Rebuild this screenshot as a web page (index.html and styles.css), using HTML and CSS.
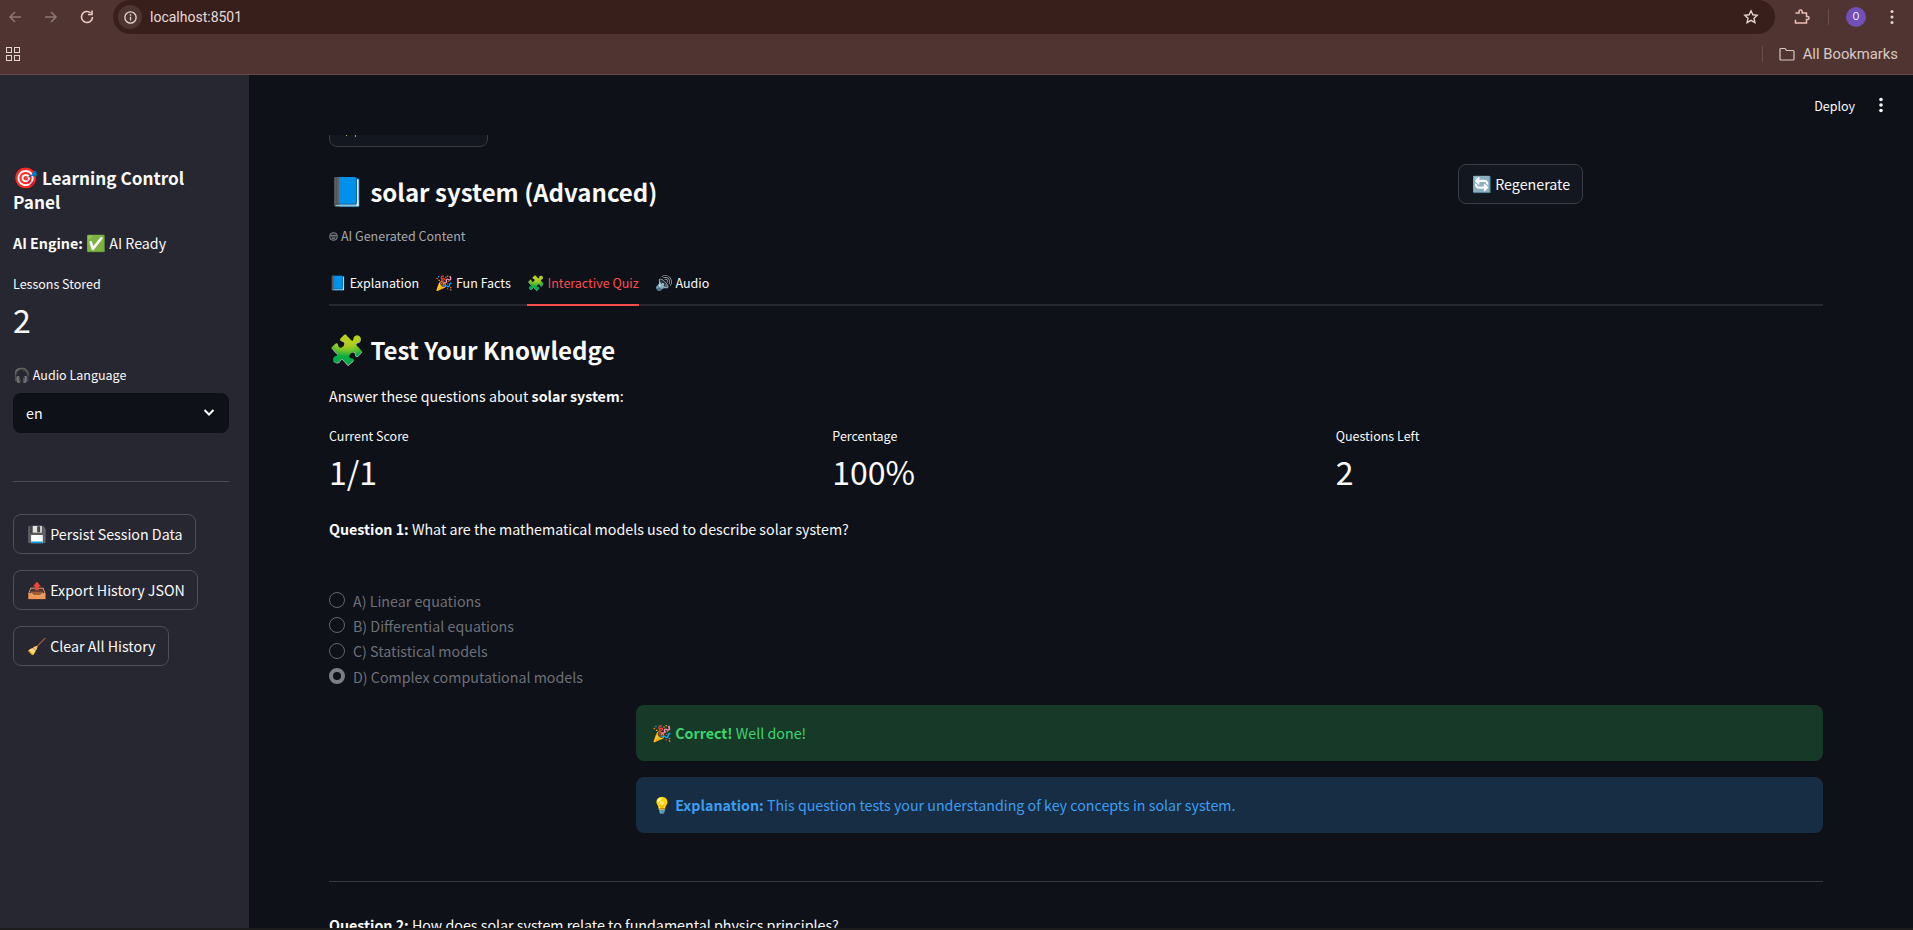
FILE: index.html
```html
<!DOCTYPE html>
<html lang="en">
<head>
<meta charset="utf-8">
<title>Streamlit</title>
<link rel="stylesheet" href="styles.css">
</head>
<body>
<div class="chrome">
  <div class="toolbar">
    <svg class="nav dim" viewBox="0 0 16 16"><path d="M14 8H3M8 3L3 8l5 5"/></svg>
    <svg class="nav dim" viewBox="0 0 16 16"><path d="M2 8h11M8 3l5 5-5 5"/></svg>
    <svg class="nav reload" viewBox="0 0 16 16"><path d="M13.500 8A5.500 5.500 0 1 1 11.600 3.800M13 1.500v4H9"/></svg>
    <div class="omnibox">
      <span class="site-chip"><svg viewBox="0 0 16 16"><circle cx="8" cy="8" r="6"/><path d="M8 7.200v4M8 4.600v1.400"/></svg></span>
      <span class="url">localhost:8501</span>
      <svg class="star" viewBox="0 0 16 16"><path d="M8 1.800l1.900 4 4.300.5-3.200 3 .9 4.300L8 11.400l-3.900 2.200.9-4.300-3.200-3 4.300-.5z"/></svg>
    </div>
    <svg class="ext" viewBox="0 0 18 18"><path d="M2.500 5h3.500V3.600a1.600 1.600 0 0 1 3.200 0V5h4.300v3.400h1a1.600 1.600 0 0 1 0 3.200h-1V15H2.500v-3.200"/></svg>
    <span class="vsep"></span>
    <span class="avatar">O</span>
    <svg class="kebab" viewBox="0 0 4 16"><circle cx="2" cy="2.500" r="1.500"/><circle cx="2" cy="8" r="1.500"/><circle cx="2" cy="13.500" r="1.500"/></svg>
  </div>
  <div class="bookmarks">
    <svg class="apps" viewBox="0 0 14 14"><rect x="0.500" y="0.500" width="5" height="5"/><rect x="8.500" y="0.500" width="5" height="5"/><rect x="0.500" y="8.500" width="5" height="5"/><rect x="8.500" y="8.500" width="5" height="5"/></svg>
    <span class="bm-sep"></span>
    <svg class="folder" viewBox="0 0 16 14"><path d="M1 2.500A1 1 0 0 1 2 1.500h4l1.500 2H14a1 1 0 0 1 1 1V12a1 1 0 0 1-1 1H2a1 1 0 0 1-1-1z"/></svg>
    <span class="bm-label">All Bookmarks</span>
  </div>
</div>
<div class="app">
  <aside class="sidebar">
    <h3 class="side-title"><span class="em">🎯</span> Learning Control Panel</h3>
    <p class="engine"><strong>AI Engine:</strong> <span class="em">✅</span> AI Ready</p>
    <div class="metric side-metric">
      <div class="metric-label">Lessons Stored</div>
      <div class="metric-value">2</div>
    </div>
    <label class="select-label"><span class="em">🎧</span> Audio Language</label>
    <div class="select"><span>en</span>
      <svg viewBox="0 0 14 14"><path d="M2.500 5L7 9.500 11.500 5"/></svg>
    </div>
    <hr class="side-rule">
    <div class="side-actions">
      <button class="btn"><span class="em">💾</span> Persist Session Data</button>
      <button class="btn"><span class="em">📤</span> Export History JSON</button>
      <button class="btn"><span class="em">🧹</span> Clear All History</button>
    </div>
  </aside>
  <main class="main">
    <header class="topbar">
      <span class="deploy">Deploy</span>
      <svg class="menu" viewBox="0 0 4 16"><circle cx="2" cy="2.500" r="1.800"/><circle cx="2" cy="8" r="1.800"/><circle cx="2" cy="13.500" r="1.800"/></svg>
    </header>
    <div class="scroll">
      <div class="content">
        <button class="btn cut-btn"><svg class="specks" viewBox="0 0 14 2"><rect x="0" y="0" width="1" height="1"/><rect x="9" y="0" width="1" height="2"/></svg></button>
        <div class="title-row">
          <div>
            <h2 class="page-title"><span class="em">📘</span> solar system (Advanced)</h2>
            <p class="caption"><svg class="bot" viewBox="0 0 9 9"><circle cx="4.500" cy="4.500" r="3.900"/><path class="bot-band" d="M1.500 3.800h6M3 6.200h3"/></svg>AI Generated Content</p>
          </div>
          <div><button class="btn regen"><span class="em">🔄</span> Regenerate</button></div>
        </div>
        <nav class="tabs">
          <span class="tab"><span class="em">📘</span> Explanation</span>
          <span class="tab"><span class="em">🎉</span> Fun Facts</span>
          <span class="tab active"><span class="em">🧩</span> Interactive Quiz</span>
          <span class="tab"><span class="em">🔊</span> Audio</span>
        </nav>
        <h3 class="section-title"><span class="em">🧩</span> Test Your Knowledge</h3>
        <p class="lead">Answer these questions about <strong>solar system</strong>:</p>
        <div class="metrics">
          <div class="metric"><div class="metric-label">Current Score</div><div class="metric-value">1/1</div></div>
          <div class="metric"><div class="metric-label">Percentage</div><div class="metric-value">100%</div></div>
          <div class="metric"><div class="metric-label">Questions Left</div><div class="metric-value">2</div></div>
        </div>
        <p class="question"><strong>Question 1:</strong> What are the mathematical models used to describe solar system?</p>
        <div class="radios">
          <div class="radio"><span class="dot"></span>A) Linear equations</div>
          <div class="radio"><span class="dot"></span>B) Differential equations</div>
          <div class="radio"><span class="dot"></span>C) Statistical models</div>
          <div class="radio"><span class="dot on"></span>D) Complex computational models</div>
        </div>
        <div class="feedback">
          <div></div>
          <div class="alerts">
            <p class="alert ok"><span class="em">🎉</span> <strong>Correct!</strong> Well done!</p>
            <p class="alert info"><span class="em">💡</span> <strong>Explanation:</strong> This question tests your understanding of key concepts in solar system.</p>
          </div>
        </div>
        <hr class="rule">
        <p class="question next"><strong>Question 2:</strong> How does solar system relate to fundamental physics principles?</p>
      </div>
    </div>
  </main>
</div>
<div class="edge"></div>
</body>
</html>
```
FILE: styles.css
```css
* { box-sizing: border-box; }
html, body { margin: 0; height: 100%; overflow: hidden; }
body {
  display: flex;
  flex-direction: column;
  background: #0e1117;
  color: #fafafa;
  font-family: "Noto Sans CJK SC", "Noto Sans", sans-serif;
  font-size: 14.250px;
}
p, h2, h3 { margin: 0; }
strong { font-weight: 600; }
.em { font-size: 1.120em; line-height: 1; }

.chrome { height: 75px; flex: none; background: #503431; border-bottom: 1px solid #6a4a44; }
.toolbar { height: 34px; display: flex; align-items: center; padding-left: 7px; }
.nav { width: 16px; height: 16px; margin-right: 20px; fill: none; stroke: #e4d6d2; stroke-width: 1.600; flex: none; }
.nav.dim { stroke: #8c7672; }
.nav.reload { stroke: #ecccc4; }
.omnibox { width: 1662px; height: 34px; flex: none; margin-left: -2px; padding: 0 16px 0 5px; background: #391f1c; border-radius: 17px; display: flex; align-items: center; }
.site-chip { width: 24px; height: 24px; border-radius: 50%; background: #4f3531; display: flex; align-items: center; justify-content: center; }
.site-chip svg { width: 15px; height: 15px; fill: none; stroke: #e6d9d5; stroke-width: 1.400; }
.url { margin-left: 8px; font: 14px "Roboto", sans-serif; color: #e8dcd9; flex: 1; }
.star { width: 16px; height: 16px; fill: none; stroke: #e4d6d2; stroke-width: 1.400; }
.ext { width: 18px; height: 18px; margin-left: 18px; fill: none; stroke: #eabfb5; stroke-width: 1.500; flex: none; }
.vsep { width: 1px; height: 16px; background: #6d4f4a; margin: 0 17px 0 17px; flex: none; }
.avatar { width: 20px; height: 20px; flex: none; border-radius: 50%; background: #7350b8; color: #f0e8fa; font: 10px/20px "Roboto", sans-serif; text-align: center; }
.kebab { width: 4px; height: 16px; margin-left: 24px; fill: #e4d6d2; flex: none; }
.bookmarks { height: 40px; display: flex; align-items: center; padding-left: 6px; padding-right: 15px; }
.apps { width: 14px; height: 14px; fill: none; stroke: #e4d6d2; stroke-width: 1; margin-right: auto; }
.bm-sep { width: 1px; height: 16px; background: #6d4f4a; margin-right: 16px; }
.folder { width: 16px; height: 14px; fill: none; stroke: #d9c9c5; stroke-width: 1.200; margin-right: 8px; }
.bm-label { font: 14.800px "Roboto", sans-serif; color: #d9c9c5; }

.app { flex: 1; min-height: 0; display: flex; }
.edge { height: 2px; flex: none; background: #1c1c1c; }
.sidebar { width: 249px; flex: none; background: #262730; padding: 91px 20px 0 13px; }
.side-title { font-size: 17.200px; font-weight: 600; line-height: 24px; }
.side-title .em { font-size: 1.180em; }
.engine { margin-top: 18px; line-height: 22px; }
.side-metric { margin-top: 20px; }
.side-metric .metric-value { margin-top: 2px; }
.select-label { display: block; margin-top: 23px; font-size: 12.500px; line-height: 20px; }
.select { height: 40px; margin-top: 8px; background: #0e1117; border-radius: 8px; padding: 0 13px 2px; display: flex; align-items: center; justify-content: space-between; }
.select svg { width: 14px; height: 14px; fill: none; stroke: #fafafa; stroke-width: 2; }
.side-rule { margin: 48px 0 32px; border: 0; border-top: 1px solid #4a4b55; }
.side-actions { display: flex; flex-direction: column; align-items: flex-start; gap: 16px; }

.btn { height: 40px; padding: 0 12px 2px 13px; border: 1px solid #4d4e58; border-radius: 8px; background: #262730; color: #fafafa; font: 14.250px "Noto Sans CJK SC", sans-serif; white-space: nowrap; }
.main { flex: 1; min-width: 0; display: flex; flex-direction: column; }
.topbar { height: 60px; flex: none; display: flex; align-items: center; justify-content: flex-end; padding-right: 30px; }
.deploy { font-size: 12.500px; margin-right: 24px; }
.menu { width: 4px; height: 16px; fill: #fafafa; }
.scroll { flex: 1; min-height: 0; overflow: hidden; padding: 0 90px 0 80px; }
.content { margin-top: -28px; }
.content .btn { background: #13171f; border-color: #3a3d46; }
.cut-btn { position: relative; width: 159px; display: block; }
.specks { position: absolute; left: 16px; top: 27px; width: 14px; height: 2px; fill: #c9a13a; }
.title-row { display: grid; grid-template-columns: minmax(0, 1113fr) minmax(0, 365fr); gap: 16px; margin-top: 17px; }
.page-title { font-size: 24px; font-weight: 600; line-height: 40px; margin-top: 8px; }
.page-title .em, .section-title .em { font-size: 1.200em; }
.caption { margin-top: 14px; font-size: 12.500px; line-height: 20px; color: #a6a8ad; display: flex; align-items: center; }
.bot { width: 9px; height: 9px; margin-right: 3px; fill: #2a2c31; stroke: #8d8e93; stroke-width: 0.900; }
.bot-band { stroke: #a6a8ad; stroke-width: 0.800; }
.regen { display: block; }
.tabs { display: flex; gap: 16px; margin-top: 19px; border-bottom: 2px solid #26282e; height: 41px; font-size: 12.500px; }
.tabs .em { font-size: 1.150em; }
.tab { height: 41px; line-height: 36px; }
.tab.active { color: #ff4b4b; border-bottom: 2px solid #ff4b4b; }
.section-title { margin-top: 24px; font-size: 24px; font-weight: 600; line-height: 40px; }
.lead { margin-top: 15px; line-height: 22px; }
.metrics { display: grid; grid-template-columns: repeat(3, 1fr); gap: 16px; margin-top: 19px; }
.metric-label { font-size: 12.500px; line-height: 20px; }
.metric-value { margin-top: 2px; font-size: 32px; line-height: 46px; }
.question { margin-top: 24px; line-height: 22px; }
.radios { margin-top: 47.500px; display: flex; flex-direction: column; }
.radio { height: 25.300px; display: flex; align-items: center; gap: 8px; color: #6d7078; }
.dot { width: 16px; height: 16px; border-radius: 50%; border: 1px solid #62656c; }
.dot.on { border: 4.500px solid #7c7e84; background: #0e1117; }
.feedback { display: grid; grid-template-columns: 291px 1fr; gap: 16px; margin-top: 16.500px; }
.alerts { display: flex; flex-direction: column; gap: 16px; }
.alert { height: 56px; padding: 0 16px 1px; border-radius: 8px; line-height: 55px; }
.alert.ok { background: #173928; color: #3dd56d; }
.alert.info { background: #172d43; color: #3d9df3; }
.rule { margin: 48px 0 0; border: 0; border-top: 1px solid #3a3c42; }
.question.next { margin-top: 32px; }
```
